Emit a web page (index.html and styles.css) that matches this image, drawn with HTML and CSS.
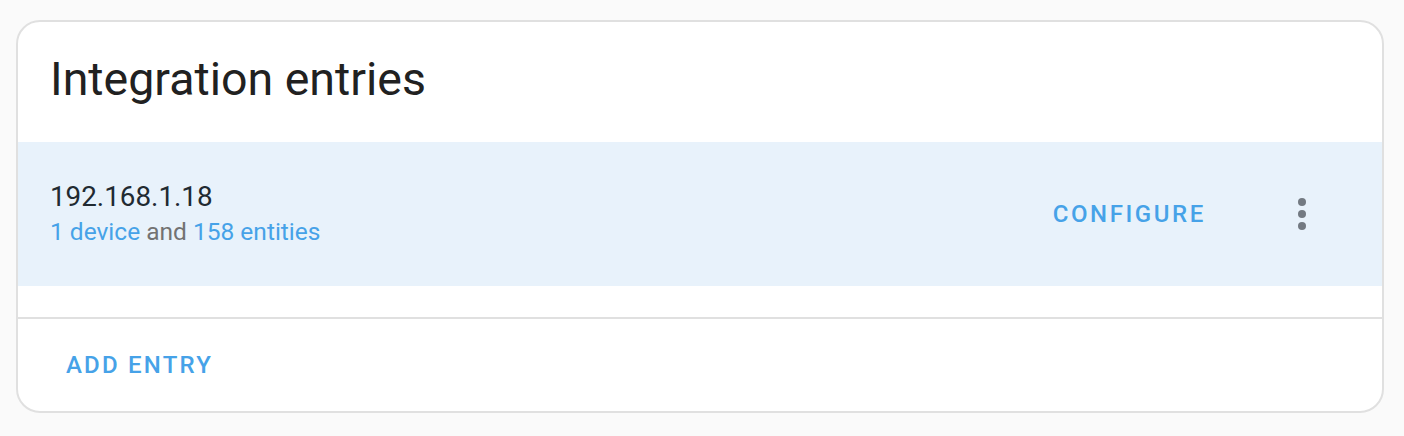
FILE: index.html
```html
<!DOCTYPE html>
<html>
<head>
<meta charset="utf-8">
<link rel="stylesheet" href="styles.css">
</head>
<body>
<div class="card">
  <div class="card-header">Integration entries</div>
  <div class="entry">
    <div class="entry-text">
      <div class="primary">192.168.1.18</div>
      <div class="secondary"><a class="link">1 device</a> and <a class="link">158 entities</a></div>
    </div>
    <button class="btn configure">CONFIGURE</button>
    <button class="icon-btn" aria-label="menu">
      <svg width="12" height="36" viewBox="0 0 12 36"><circle cx="6" cy="6" r="4"/><circle cx="6" cy="18" r="4"/><circle cx="6" cy="30" r="4"/></svg>
    </button>
  </div>
  <div class="spacer"></div>
  <div class="card-actions">
    <button class="btn">ADD ENTRY</button>
  </div>
</div>
</body>
</html>
```

FILE: styles.css
```css
html, body {
  margin: 0;
  padding: 0;
  background: #fafafa;
  font-family: Roboto, "Noto Sans", sans-serif;
}
.card {
  margin: 20px 20px 0 16px;
  background: #fff;
  border: 2px solid #e0e0e0;
  border-radius: 24px;
  overflow: hidden;
}
.card-header {
  padding: 25px 32px 31px;
  font-size: 46.5px;
  line-height: 64px;
  color: #212121;
}
.entry {
  height: 144px;
  background: #e8f2fb;
  display: flex;
  align-items: center;
  padding: 0 32px;
}
.entry-text {
  flex: 1;
}
.primary {
  font-size: 27.8px;
  line-height: 36px;
  color: #212a31;
}
.secondary {
  font-size: 24.5px;
  line-height: 34px;
  color: #727272;
}
.link {
  color: #46a2e8;
}
.btn {
  border: none;
  background: none;
  font-family: Roboto, sans-serif;
  font-weight: 500;
  font-size: 24px;
  letter-spacing: 2.2px;
  color: #46a2e8;
  padding: 0 16px;
  height: 72px;
}
.configure {
  margin-right: 32px;
  letter-spacing: 2.6px;
}
.icon-btn {
  border: none;
  background: none;
  width: 96px;
  height: 96px;
  display: flex;
  align-items: center;
  justify-content: center;
  padding: 0;
}
.icon-btn svg {
  fill: #737a82;
}
.spacer {
  height: 31px;
}
.card-actions {
  border-top: 2px solid #e0e0e0;
  height: 92px;
  display: flex;
  align-items: center;
  padding: 0 32px;
}
```
